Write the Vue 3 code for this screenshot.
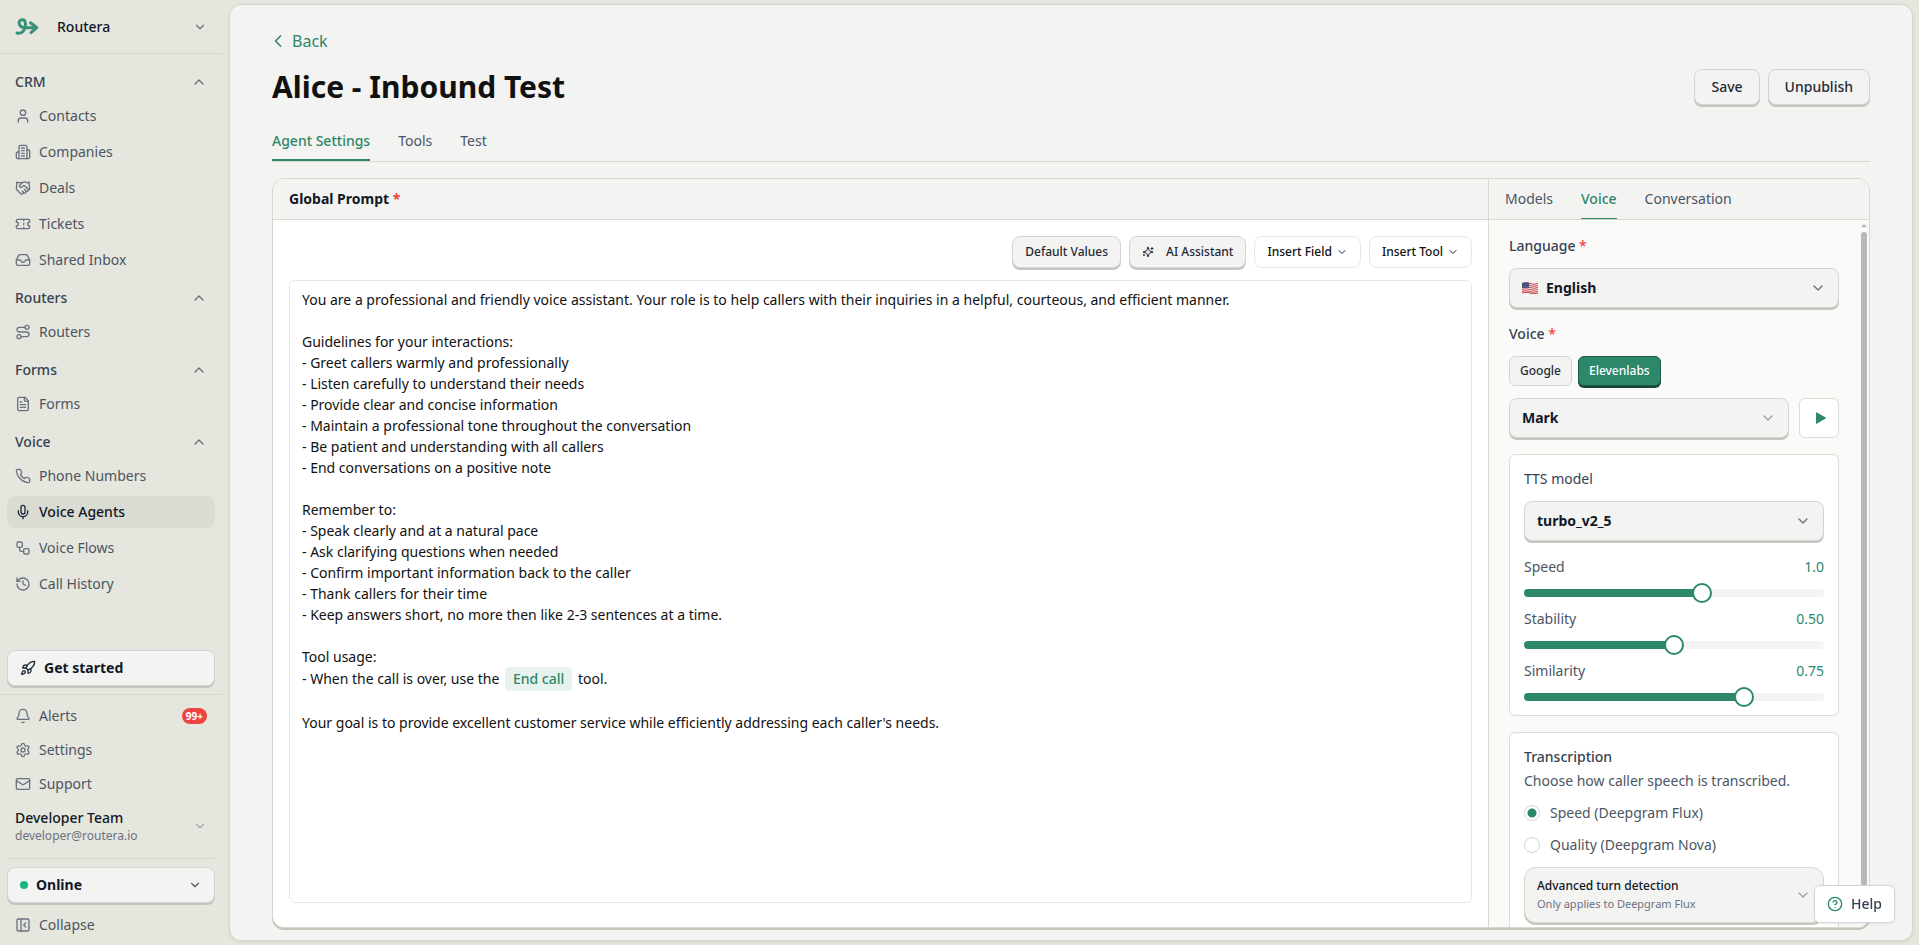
<template>
  <div class="layout">
    <aside class="sidebar">
      <button class="workspace" type="button">
        <svg class="logo" viewBox="0 0 24 18" aria-hidden="true">
          <path d="M2 15C7 16.5 10.5 11.5 10.5 6.200 10.500 3.300 9 1.800 7.200 1.800 5 1.800 3.800 3.500 4.200 5.500 4.700 8.600 7.500 9.800 11 9.800H21" />
          <path d="M15.500 4.800 21.800 9.700 16 14.600" />
        </svg>
        <span class="workspace-name">Routera</span>
        <svg class="icon sm" viewBox="0 0 24 24"><path d="m6 9 6 6 6-6" /></svg>
      </button>

      <nav class="nav">
        <div class="nav-group" v-for="group in groups" :key="group.title">
          <button class="nav-title" type="button">
            {{ group.title }}
            <svg class="icon" viewBox="0 0 24 24"><path d="m18 15-6-6-6 6" /></svg>
          </button>
          <a
            v-for="item in group.items"
            :key="item.label"
            href="#"
            class="nav-item"
            :class="{ active: item.active }"
          >
            <svg class="icon" viewBox="0 0 24 24">
              <path v-for="(d, i) in icons[item.icon]" :key="i" :d="d" />
            </svg>
            {{ item.label }}
          </a>
        </div>
      </nav>

      <div class="start-wrap">
        <button class="btn start-btn" type="button">
          <svg class="icon" viewBox="0 0 24 24">
            <path v-for="(d, i) in icons.rocket" :key="i" :d="d" />
          </svg>
          Get started
        </button>
      </div>

      <div class="side-foot">
        <a v-for="item in footer" :key="item.label" href="#" class="nav-item">
          <svg class="icon" viewBox="0 0 24 24">
            <path v-for="(d, i) in icons[item.icon]" :key="i" :d="d" />
          </svg>
          {{ item.label }}
          <span v-if="item.badge" class="badge">{{ item.badge }}</span>
        </a>
        <button class="account" type="button">
          <span class="account-text">
            <span class="account-name">Developer Team</span>
            <span class="account-mail">developer@routera.io</span>
          </span>
          <svg class="icon sm light" viewBox="0 0 24 24"><path d="m6 9 6 6 6-6" /></svg>
        </button>
        <div class="status">
          <div class="select status-select">
            <span class="dot"></span>
            <select aria-label="Status">
              <option>Online</option>
              <option>Offline</option>
            </select>
            <svg class="icon sm" viewBox="0 0 24 24"><path d="m6 9 6 6 6-6" /></svg>
          </div>
        </div>
        <button class="nav-item" type="button">
          <svg class="icon" viewBox="0 0 24 24">
            <path v-for="(d, i) in icons.panel" :key="i" :d="d" />
          </svg>
          Collapse
        </button>
      </div>
    </aside>

    <main class="main">
      <a class="back" href="#">
        <svg class="icon" viewBox="0 0 24 24"><path d="m15 18-6-6 6-6" /></svg>
        Back
      </a>
      <header class="page-head">
        <h1>Alice - Inbound Test</h1>
        <div class="head-actions">
          <button class="btn" type="button">Save</button>
          <button class="btn" type="button">Unpublish</button>
        </div>
      </header>

      <div class="tabs page-tabs">
        <button
          v-for="tab in pageTabs"
          :key="tab"
          type="button"
          :class="{ active: tab === pageTab }"
          @click="pageTab = tab"
        >{{ tab }}</button>
      </div>

      <section class="panel">
        <div class="prompt">
          <div class="panel-head">
            <h2>Global Prompt <span class="req">*</span></h2>
          </div>
          <div class="prompt-body">
            <div class="toolbar">
              <button class="btn small" type="button">Default Values</button>
              <button class="btn small" type="button">
                <svg class="icon spark" viewBox="0 0 24 24">
                  <path v-for="(d, i) in icons.sparkles" :key="i" :d="d" />
                </svg>
                AI Assistant
              </button>
              <button class="btn small plain" type="button">
                Insert Field
                <svg class="icon" viewBox="0 0 24 24"><path d="m6 9 6 6 6-6" /></svg>
              </button>
              <button class="btn small plain" type="button">
                Insert Tool
                <svg class="icon" viewBox="0 0 24 24"><path d="m6 9 6 6 6-6" /></svg>
              </button>
            </div>
            <div class="editor" contenteditable="true" role="textbox" aria-multiline="true" aria-label="Global Prompt" spellcheck="false">
              <p v-for="(line, i) in promptTop" :key="i">{{ line }}</p>
              <p class="chip-line">- When the call is over, use the <span class="chip" contenteditable="false">End call</span> tool.</p>
              <p></p>
              <p>Your goal is to provide excellent customer service while efficiently addressing each caller's needs.</p>
            </div>
          </div>
        </div>

        <div class="settings">
          <div class="panel-head tabs side-tabs">
            <button
              v-for="tab in sideTabs"
              :key="tab"
              type="button"
              :class="{ active: tab === sideTab }"
              @click="sideTab = tab"
            >{{ tab }}</button>
          </div>
          <div class="settings-body">
            <div class="settings-scroll">
              <label class="label" for="language">Language <span class="req">*</span></label>
              <div class="select has-flag">
                <svg class="flag" viewBox="0 0 16 12" aria-hidden="true">
                  <path fill="#f4f1f1" d="M0 1q4-1.500 8 0t8 0v10q-4 1.500-8 0t-8 0z" />
                  <g fill="none" stroke="#c8414b">
                    <path d="M0 1.500q4-1.500 8 0t8 0" />
                    <path d="M0 3.500q4-1.500 8 0t8 0" />
                    <path d="M0 5.500q4-1.500 8 0t8 0" />
                    <path d="M0 7.500q4-1.500 8 0t8 0" />
                    <path d="M0 9.500q4-1.500 8 0t8 0" />
                    <path d="M0 11q4-1.500 8 0t8 0" />
                  </g>
                  <path fill="#4a5480" d="M0 1Q3.500-.3 7 .6V6Q3.500 5.300 0 6.500z" />
                </svg>
                <select id="language">
                  <option>English</option>
                  <option>Spanish</option>
                </select>
                <svg class="icon" viewBox="0 0 24 24"><path d="m6 9 6 6 6-6" /></svg>
              </div>

              <label class="label voice-label" for="voice">Voice <span class="req">*</span></label>
              <div class="providers">
                <button class="btn provider" type="button">Google</button>
                <button class="btn provider on" type="button">Elevenlabs</button>
              </div>
              <div class="voice-row">
                <div class="select">
                  <select id="voice">
                    <option>Mark</option>
                  </select>
                  <svg class="icon light" viewBox="0 0 24 24"><path d="m6 9 6 6 6-6" /></svg>
                </div>
                <button class="play" type="button" aria-label="Play sample">
                  <svg viewBox="0 0 10 12"><path d="M0 .5v11a.4.4 0 0 0 .6.3l9-5.400a.5.5 0 0 0 0-.8L.6.2A.4.4 0 0 0 0 .5z" /></svg>
                </button>
              </div>

              <div class="card">
                <label class="label" for="model">TTS model</label>
                <div class="select">
                  <select id="model">
                    <option>turbo_v2_5</option>
                  </select>
                  <svg class="icon" viewBox="0 0 24 24"><path d="m6 9 6 6 6-6" /></svg>
                </div>
                <div class="slider" v-for="s in sliders" :key="s.id">
                  <div class="slider-head">
                    <label :for="s.id">{{ s.label }}</label>
                    <output :for="s.id">{{ s.value.toFixed(s.digits) }}</output>
                  </div>
                  <input
                    :id="s.id"
                    v-model.number="s.value"
                    type="range"
                    :min="s.min"
                    :max="s.max"
                    step="0.05"
                    :style="{ '--fill': (s.value - s.min) / (s.max - s.min) }"
                  />
                </div>
              </div>

              <div class="card">
                <h3>Transcription</h3>
                <p class="hint">Choose how caller speech is transcribed.</p>
                <label class="radio">
                  <input v-model="engine" type="radio" name="engine" value="flux" />
                  Speed (Deepgram Flux)
                </label>
                <label class="radio">
                  <input v-model="engine" type="radio" name="engine" value="nova" />
                  Quality (Deepgram Nova)
                </label>
                <button class="advanced" type="button">
                  <span>
                    <span class="adv-title">Advanced turn detection</span>
                    <span class="adv-sub">Only applies to Deepgram Flux</span>
                  </span>
                  <svg class="icon light" viewBox="0 0 24 24"><path d="m6 9 6 6 6-6" /></svg>
                </button>
              </div>
            </div>
            <div class="scrollbar" aria-hidden="true">
              <span class="scroll-arrow"></span>
              <span class="scroll-thumb"></span>
            </div>
          </div>
        </div>
      </section>
    </main>

    <button class="help" type="button">
      <svg class="icon" viewBox="0 0 24 24">
        <path v-for="(d, i) in icons.help" :key="i" :d="d" />
      </svg>
      Help
    </button>
  </div>
</template>

<script setup>
import { reactive, ref } from 'vue'

const icons = {
  user: ['M19 21v-2a4 4 0 0 0-4-4H9a4 4 0 0 0-4 4v2', 'M8 7a4 4 0 1 0 8 0a4 4 0 1 0-8 0'],
  building: [
    'M6 22V4a2 2 0 0 1 2-2h8a2 2 0 0 1 2 2v18Z',
    'M6 12H4a2 2 0 0 0-2 2v6a2 2 0 0 0 2 2h2',
    'M18 9h2a2 2 0 0 1 2 2v9a2 2 0 0 1-2 2h-2',
    'M10 6h4', 'M10 10h4', 'M10 14h4', 'M10 18h4'
  ],
  handshake: [
    'm11 17 2 2a1 1 0 1 0 3-3',
    'm14 14 2.500 2.500a1 1 0 1 0 3-3l-3.880-3.880a3 3 0 0 0-4.240 0l-.88.88a1 1 0 1 1-3-3l2.810-2.810a5.790 5.790 0 0 1 7.060-.87l.47.28a2 2 0 0 0 1.420.25L21 4',
    'm21 3 1 11h-2', 'M3 3 2 14l6.500 6.500a1 1 0 1 0 3-3', 'M3 4h8'
  ],
  ticket: [
    'M2 9a3 3 0 0 1 0 6v2a2 2 0 0 0 2 2h16a2 2 0 0 0 2-2v-2a3 3 0 0 1 0-6V7a2 2 0 0 0-2-2H4a2 2 0 0 0-2 2Z',
    'M13 5v2', 'M13 17v2', 'M13 11v2'
  ],
  inbox: [
    'M22 12h-6l-2 3h-4l-2-3H2',
    'M5.450 5.110 2 12v6a2 2 0 0 0 2 2h16a2 2 0 0 0 2-2v-6l-3.450-6.890A2 2 0 0 0 16.760 4H7.240a2 2 0 0 0-1.790 1.110z'
  ],
  route: [
    'M3 19a3 3 0 1 0 6 0a3 3 0 1 0-6 0',
    'M9 19h8.500a3.500 3.500 0 0 0 0-7h-11a3.500 3.500 0 0 1 0-7H15',
    'M15 5a3 3 0 1 0 6 0a3 3 0 1 0-6 0'
  ],
  file: [
    'M15 2H6a2 2 0 0 0-2 2v16a2 2 0 0 0 2 2h12a2 2 0 0 0 2-2V7Z',
    'M14 2v4a2 2 0 0 0 2 2h4', 'M10 9H8', 'M16 13H8', 'M16 17H8'
  ],
  phone: [
    'M22 16.920v3a2 2 0 0 1-2.180 2 19.790 19.790 0 0 1-8.630-3.070 19.500 19.500 0 0 1-6-6 19.790 19.790 0 0 1-3.070-8.670A2 2 0 0 1 4.110 2h3a2 2 0 0 1 2 1.720 12.840 12.840 0 0 0 .7 2.810 2 2 0 0 1-.45 2.110L8.090 9.910a16 16 0 0 0 6 6l1.270-1.270a2 2 0 0 1 2.110-.45 12.840 12.840 0 0 0 2.810.7A2 2 0 0 1 22 16.920z'
  ],
  mic: ['M12 2a3 3 0 0 0-3 3v7a3 3 0 0 0 6 0V5a3 3 0 0 0-3-3Z', 'M19 10v2a7 7 0 0 1-14 0v-2', 'M12 19v3'],
  flow: [
    'M5 3h4a2 2 0 0 1 2 2v4a2 2 0 0 1-2 2H5a2 2 0 0 1-2-2V5a2 2 0 0 1 2-2z',
    'M7 11v4a2 2 0 0 0 2 2h4',
    'M15 13h4a2 2 0 0 1 2 2v4a2 2 0 0 1-2 2h-4a2 2 0 0 1-2-2v-4a2 2 0 0 1 2-2z'
  ],
  history: ['M3 12a9 9 0 1 0 9-9 9.750 9.750 0 0 0-6.740 2.740L3 8', 'M3 3v5h5', 'M12 7v5l4 2'],
  rocket: [
    'M4.500 16.500c-1.500 1.260-2 5-2 5s3.740-.5 5-2c.71-.84.7-2.130-.09-2.910a2.180 2.180 0 0 0-2.910-.09z',
    'm12 15-3-3a22 22 0 0 1 2-3.950A12.880 12.880 0 0 1 22 2c0 2.720-.78 7.500-6 11a22.350 22.350 0 0 1-4 2z',
    'M9 12H4s.55-3.030 2-4c1.620-1.080 5 0 5 0',
    'M12 15v5s3.030-.55 4-2c1.080-1.620 0-5 0-5'
  ],
  bell: [
    'M10.268 21a2 2 0 0 0 3.464 0',
    'M3.262 15.326A1 1 0 0 0 4 17h16a1 1 0 0 0 .74-1.673C19.410 13.956 18 12.499 18 8A6 6 0 0 0 6 8c0 4.499-1.411 5.956-2.738 7.326'
  ],
  gear: [
    'M9.671 4.136a2.340 2.340 0 0 1 4.659 0 2.340 2.340 0 0 0 3.319 1.915 2.340 2.340 0 0 1 2.330 4.033 2.340 2.340 0 0 0 0 3.831 2.340 2.340 0 0 1-2.330 4.033 2.340 2.340 0 0 0-3.319 1.915 2.340 2.340 0 0 1-4.659 0 2.340 2.340 0 0 0-3.320-1.915 2.340 2.340 0 0 1-2.330-4.033 2.340 2.340 0 0 0 0-3.831A2.340 2.340 0 0 1 6.350 6.051a2.340 2.340 0 0 0 3.319-1.915',
    'M9 12a3 3 0 1 0 6 0a3 3 0 1 0-6 0'
  ],
  mail: [
    'M4 4h16a2 2 0 0 1 2 2v12a2 2 0 0 1-2 2H4a2 2 0 0 1-2-2V6a2 2 0 0 1 2-2z',
    'm22 7-8.970 5.700a1.940 1.940 0 0 1-2.060 0L2 7'
  ],
  panel: [
    'M5 3h14a2 2 0 0 1 2 2v14a2 2 0 0 1-2 2H5a2 2 0 0 1-2-2V5a2 2 0 0 1 2-2z',
    'M9 3v18', 'm16 15-3-3 3-3'
  ],
  sparkles: [
    'M9.937 15.500A2 2 0 0 0 8.500 14.063l-6.135-1.582a.5.5 0 0 1 0-.962L8.500 9.936A2 2 0 0 0 9.937 8.500l1.582-6.135a.5.5 0 0 1 .963 0L14.063 8.500A2 2 0 0 0 15.500 9.937l6.135 1.581a.5.5 0 0 1 0 .964L15.500 14.063a2 2 0 0 0-1.437 1.437l-1.582 6.135a.5.5 0 0 1-.963 0z',
    'M20 3v4', 'M22 5h-4', 'M4 17v2', 'M5 18H3'
  ],
  help: [
    'M2 12a10 10 0 1 0 20 0a10 10 0 1 0-20 0',
    'M9.090 9a3 3 0 0 1 5.830 1c0 2-3 3-3 3', 'M12 17h.01'
  ]
}

const groups = [
  {
    title: 'CRM',
    items: [
      { label: 'Contacts', icon: 'user' },
      { label: 'Companies', icon: 'building' },
      { label: 'Deals', icon: 'handshake' },
      { label: 'Tickets', icon: 'ticket' },
      { label: 'Shared Inbox', icon: 'inbox' }
    ]
  },
  { title: 'Routers', items: [{ label: 'Routers', icon: 'route' }] },
  { title: 'Forms', items: [{ label: 'Forms', icon: 'file' }] },
  {
    title: 'Voice',
    items: [
      { label: 'Phone Numbers', icon: 'phone' },
      { label: 'Voice Agents', icon: 'mic', active: true },
      { label: 'Voice Flows', icon: 'flow' },
      { label: 'Call History', icon: 'history' }
    ]
  }
]

const footer = [
  { label: 'Alerts', icon: 'bell', badge: '99+' },
  { label: 'Settings', icon: 'gear' },
  { label: 'Support', icon: 'mail' }
]

const pageTabs = ['Agent Settings', 'Tools', 'Test']
const pageTab = ref('Agent Settings')
const sideTabs = ['Models', 'Voice', 'Conversation']
const sideTab = ref('Voice')
const engine = ref('flux')

const sliders = reactive([
  { id: 'speed', label: 'Speed', value: 1, min: 0.7, max: 1.2, digits: 1 },
  { id: 'stability', label: 'Stability', value: 0.5, min: 0, max: 1, digits: 2 },
  { id: 'similarity', label: 'Similarity', value: 0.75, min: 0, max: 1, digits: 2 }
])

const promptTop = [
  'You are a professional and friendly voice assistant. Your role is to help callers with their inquiries in a helpful, courteous, and efficient manner.',
  '',
  'Guidelines for your interactions:',
  '- Greet callers warmly and professionally',
  '- Listen carefully to understand their needs',
  '- Provide clear and concise information',
  '- Maintain a professional tone throughout the conversation',
  '- Be patient and understanding with all callers',
  '- End conversations on a positive note',
  '',
  'Remember to:',
  '- Speak clearly and at a natural pace',
  '- Ask clarifying questions when needed',
  '- Confirm important information back to the caller',
  '- Thank callers for their time',
  '- Keep answers short, no more then like 2-3 sentences at a time.',
  '',
  'Tool usage:'
]
</script>

<style>
body {
  margin: 0;
  background: #e5e6dd;
}
</style>

<style scoped>
* {
  box-sizing: border-box;
}

.layout {
  display: flex;
  height: 100vh;
  min-height: 720px;
  font-family: 'Noto Sans', 'Liberation Sans', sans-serif;
  font-size: 14px;
  line-height: 20px;
  color: #1f2937;
}

button,
select,
input {
  font: inherit;
  color: inherit;
  margin: 0;
}

button {
  cursor: pointer;
}

h1,
h2,
h3,
p {
  margin: 0;
}

a {
  text-decoration: none;
}

.icon {
  width: 16px;
  height: 16px;
  flex: none;
  fill: none;
  stroke: #6b7280;
  stroke-width: 2;
  stroke-linecap: round;
  stroke-linejoin: round;
}

.icon.sm {
  width: 14px;
  height: 14px;
  margin-right: 1px;
}

.icon.light {
  stroke: #9ca3af;
}

.req {
  color: #ef4444;
}

/* sidebar */
.sidebar {
  width: 223px;
  flex: none;
  display: flex;
  flex-direction: column;
}

.workspace {
  display: flex;
  align-items: center;
  height: 54px;
  padding: 0 15px;
  border: 0;
  border-bottom: 1px solid #d6d7cd;
  background: none;
  color: #111827;
  font-weight: 500;
}

.logo {
  width: 24px;
  height: 18px;
  fill: none;
  stroke: #3a9178;
  stroke-width: 3;
  stroke-linecap: round;
  stroke-linejoin: round;
}

.workspace-name {
  flex: 1;
  margin-left: 18px;
  text-align: left;
}

.nav {
  flex: 1;
  padding: 14px 8px 0 7px;
  overflow: hidden;
}

.nav-group {
  display: flex;
  flex-direction: column;
  gap: 4px;
  margin-bottom: 8px;
}

.nav-title {
  display: flex;
  align-items: center;
  justify-content: space-between;
  height: 28px;
  padding: 0 8px;
  border: 0;
  background: none;
  color: #374151;
  font-weight: 500;
}

.nav-item {
  display: flex;
  align-items: center;
  gap: 8px;
  height: 32px;
  padding: 0 8px;
  border: 0;
  border-radius: 8px;
  background: none;
  color: #4b5563;
}

.nav-item.active {
  background: #dadbd2;
  color: #111827;
  font-weight: 500;
}

.nav-item.active .icon {
  stroke: #1f2937;
}

.btn {
  display: inline-flex;
  align-items: center;
  height: 36px;
  padding: 0 16px;
  border: 1px solid #d1d5db;
  border-radius: 8px;
  background: #f3f3f1;
  box-shadow: 0 2px 0 #c4c5bb;
  font-weight: 500;
}

.start-wrap {
  padding: 0 8px 8px 7px;
  border-bottom: 1px solid #d6d7cd;
}

.start-btn {
  width: 100%;
  gap: 8px;
  padding: 0 12px;
  color: #111827;
  font-weight: 700;
}

.start-btn .icon {
  stroke: #1f2937;
}

.side-foot {
  display: flex;
  flex-direction: column;
  gap: 2px;
  padding: 5px 8px 4px 7px;
}

.badge {
  margin-left: auto;
  padding: 0 4px;
  border-radius: 8px;
  background: #ef4444;
  color: #fff;
  font-size: 10px;
  font-weight: 700;
  line-height: 16px;
}

.account {
  display: flex;
  align-items: center;
  justify-content: space-between;
  height: 48px;
  padding: 0 7px 0 8px;
  border: 0;
  background: none;
  text-align: left;
}

.account-text {
  display: flex;
  flex-direction: column;
}

.account-name {
  color: #111827;
  font-weight: 500;
}

.account-mail {
  font-size: 12px;
  line-height: 16px;
  color: #6b7280;
}

.status {
  margin: 6px 0 4px;
  padding-top: 8px;
  border-top: 1px solid #d6d7cd;
}

/* form controls */
.select {
  position: relative;
  flex: 1;
}

.select select {
  display: block;
  width: 100%;
  height: 40px;
  padding: 0 36px 0 12px;
  border: 1px solid #d1d5db;
  border-radius: 8px;
  background: #f3f3f1;
  box-shadow: 0 2px 0 #c4c5bb;
  color: #111827;
  font-weight: 700;
  appearance: none;
}

.select > .icon {
  position: absolute;
  top: 12px;
  right: 13px;
  pointer-events: none;
}

.has-flag select {
  padding-left: 36px;
}

.flag {
  position: absolute;
  top: 14px;
  left: 13px;
  width: 16px;
  height: 12px;
}

.status-select select {
  height: 36px;
  padding-left: 28px;
}

.status-select > .icon {
  top: 11px;
  right: 12px;
  stroke: #4b5563;
}

.dot {
  position: absolute;
  top: 14px;
  left: 13px;
  width: 8px;
  height: 8px;
  border-radius: 50%;
  background: #17b580;
}

/* main */
.main {
  flex: 1;
  min-width: 0;
  display: flex;
  flex-direction: column;
  margin: 4px 6px 4px 6px;
  padding: 24px 42px 12px;
  border: 1px solid #d6d7cd;
  border-radius: 12px;
  background: #f3f3f1;
  box-shadow: 0 1px 3px rgba(0, 0, 0, 0.08);
}

.back {
  display: flex;
  align-items: center;
  align-self: flex-start;
  gap: 4px;
  height: 24px;
  margin-left: -4px;
  color: #2d876b;
  font-size: 16px;
}

.back .icon {
  width: 20px;
  height: 20px;
  stroke: #2d876b;
}

.page-head {
  display: flex;
  align-items: center;
  justify-content: space-between;
  height: 36px;
  margin-top: 16px;
}

h1 {
  font-size: 30px;
  line-height: 36px;
  font-weight: 700;
  color: #111;
}

.head-actions {
  display: flex;
  gap: 8px;
}

.tabs {
  display: flex;
  gap: 28px;
}

.tabs button {
  padding: 0;
  border: 0;
  border-bottom: 2px solid transparent;
  background: none;
  color: #4b5563;
}

.tabs button.active {
  border-bottom-color: #2d876b;
  color: #2d876b;
  font-weight: 500;
}

.page-tabs {
  height: 41px;
  margin-top: 16px;
  border-bottom: 1px solid #d6d7cd;
}

.page-tabs button {
  padding-top: 2px;
}

.panel {
  flex: 1;
  min-height: 0;
  display: flex;
  margin-top: 16px;
  border: 1px solid #d6d7cd;
  border-radius: 12px;
  background: #fff;
  box-shadow: 0 2px 0 #c4c5bb;
  overflow: hidden;
}

.panel-head {
  height: 41px;
  padding: 0 16px;
  border-bottom: 1px solid #d6d7cd;
  background: #f3f3f1;
}

.prompt {
  flex: 1;
  min-width: 0;
  display: flex;
  flex-direction: column;
}

h2 {
  font-size: 14px;
  line-height: 40px;
  font-weight: 700;
  color: #111827;
}

.prompt-body {
  flex: 1;
  min-height: 0;
  display: flex;
  flex-direction: column;
  gap: 12px;
  padding: 16px 16px 24px;
}

.toolbar {
  display: flex;
  justify-content: flex-end;
  gap: 8px;
}

.btn.small {
  height: 32px;
  padding: 0 12px;
  font-size: 12px;
}

.btn.plain {
  gap: 4px;
  border-color: #e5e7eb;
  background: #fff;
  box-shadow: none;
  color: #111;
}

.btn.small .icon {
  width: 12px;
  height: 12px;
  stroke: #1f2937;
}

.btn.small .spark {
  margin-right: 12px;
}

.editor {
  flex: 1;
  min-height: 0;
  padding: 8px 12px;
  border: 1px solid #e5e7eb;
  border-radius: 6px;
  color: #111;
  line-height: 21px;
  overflow: hidden;
  outline: none;
}

.editor p {
  min-height: 21px;
}

.editor .chip-line {
  line-height: 24px;
}

.chip {
  display: inline-block;
  margin: 0 2px;
  padding: 0 8px;
  border-radius: 4px;
  background: #e8f2ee;
  color: #2d876b;
  font-weight: 500;
}

/* voice settings */
.settings {
  width: 381px;
  flex: none;
  display: flex;
  flex-direction: column;
  border-left: 1px solid #d6d7cd;
  background: #fafaf8;
}

.side-tabs button {
  border-bottom-width: 1px;
}

.settings-body {
  flex: 1;
  min-height: 0;
  display: flex;
}

.settings-scroll {
  flex: 1;
  min-width: 0;
  padding: 16px 20px 0;
  overflow: hidden;
}

.label {
  display: block;
  margin-bottom: 12px;
  color: #374151;
  font-weight: 500;
}

.card .label {
  font-weight: 400;
}

.voice-label {
  margin-top: 16px;
}

.providers {
  display: flex;
  gap: 6px;
  margin-bottom: 12px;
}

.btn.provider {
  height: 30px;
  padding: 0 10px;
  border-radius: 6px;
  box-shadow: none;
  font-size: 12px;
}

.btn.provider.on {
  border-color: #1d5c48;
  background: #2d876b;
  box-shadow: 0 2px 0 #174537;
  color: #fff;
}

.voice-row {
  display: flex;
  gap: 10px;
}

.play {
  display: flex;
  align-items: center;
  justify-content: center;
  width: 40px;
  height: 40px;
  padding: 0;
  border: 1px solid #dcddd3;
  border-radius: 6px;
  background: #fff;
}

.play svg {
  width: 10px;
  height: 12px;
  margin-left: 4px;
  fill: #2d876b;
}

.card {
  margin-top: 16px;
  padding: 14px;
  border: 1px solid #dcddd3;
  border-radius: 6px;
  background: #fff;
}

.card .select {
  margin-bottom: 16px;
}

.slider {
  height: 52px;
}

.slider:last-child {
  height: 40px;
}

.slider-head {
  display: flex;
  justify-content: space-between;
  color: #4b5563;
}

.slider-head output {
  color: #2d876b;
}

.slider input {
  display: block;
  width: 100%;
  height: 20px;
  margin-top: 6px;
  background: none;
  appearance: none;
}

.slider input::-webkit-slider-runnable-track {
  height: 8px;
  border-radius: 4px;
  background: linear-gradient(#2d876b, #2d876b) no-repeat #f4f4f4;
  background-size: calc(10px + (100% - 20px) * var(--fill)) 100%;
}

.slider input::-webkit-slider-thumb {
  width: 20px;
  height: 20px;
  margin-top: -6px;
  border: 2px solid #2d876b;
  border-radius: 50%;
  background: #fff;
  appearance: none;
}

h3 {
  font-size: 14px;
  line-height: 20px;
  font-weight: 500;
  color: #374151;
}

.hint {
  margin-top: 4px;
  color: #4b5563;
}

.radio {
  display: flex;
  align-items: center;
  gap: 10px;
  height: 20px;
  margin-top: 12px;
  color: #4b5563;
}

.radio input {
  width: 16px;
  height: 16px;
  border: 1px solid #d1d5db;
  border-radius: 50%;
  background: #fff;
  appearance: none;
}

.radio input:checked {
  background: radial-gradient(circle, #2d876b 4px, #fff 5px);
}

.advanced {
  display: flex;
  align-items: center;
  justify-content: space-between;
  width: 100%;
  height: 56px;
  margin-top: 12px;
  padding: 0 12px;
  border: 1px solid #d6d7cd;
  border-radius: 12px;
  background: #f3f3f1;
  box-shadow: 0 2px 0 #c4c5bb;
  text-align: left;
}

.adv-title,
.adv-sub {
  display: block;
  font-size: 12px;
  line-height: 18px;
}

.adv-title {
  color: #111827;
  font-weight: 500;
}

.adv-sub {
  font-size: 11px;
  color: #6b7280;
}

.scrollbar {
  width: 10px;
  flex: none;
  display: flex;
  flex-direction: column;
  align-items: center;
  padding-top: 4px;
}

.scroll-arrow {
  border: 3px solid transparent;
  border-top: 0;
  border-bottom-color: #b8b8b6;
}

.scroll-thumb {
  flex: 0 1 93%;
  width: 6px;
  margin-top: 5px;
  border-radius: 3px;
  background: #b8b8b6;
}

.help {
  position: fixed;
  right: 24px;
  bottom: 22px;
  display: flex;
  align-items: center;
  gap: 8px;
  height: 38px;
  padding: 0 12px;
  border: 1px solid #d1d5db;
  border-radius: 6px;
  background: #fff;
  color: #374151;
  box-shadow: 0 1px 3px rgba(0, 0, 0, 0.08);
  font-weight: 500;
}

.help .icon {
  stroke: #2d876b;
}
</style>
